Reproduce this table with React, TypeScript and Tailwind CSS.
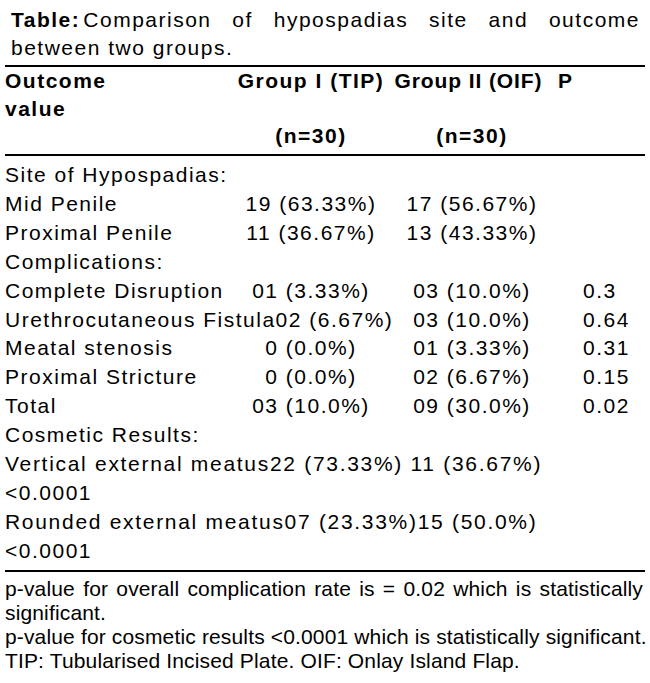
import React from "react";

type Row =
  | { kind: "label"; text: string }
  | { kind: "data"; label: string; g1: string; g2: string; p?: string }
  | { kind: "merged"; text: string; g2: string; p: string }
  | { kind: "line"; text: string; wide?: boolean };

const rows: Row[] = [
  { kind: "label", text: "Site of Hypospadias:" },
  { kind: "data", label: "Mid Penile", g1: "19 (63.33%)", g2: "17 (56.67%)" },
  { kind: "data", label: "Proximal Penile", g1: "11 (36.67%)", g2: "13 (43.33%)" },
  { kind: "label", text: "Complications:" },
  { kind: "data", label: "Complete Disruption", g1: "01 (3.33%)", g2: "03 (10.0%)", p: "0.3" },
  { kind: "merged", text: "Urethrocutaneous Fistula02 (6.67%)", g2: "03 (10.0%)", p: "0.64" },
  { kind: "data", label: "Meatal stenosis", g1: "0 (0.0%)", g2: "01 (3.33%)", p: "0.31" },
  { kind: "data", label: "Proximal Stricture", g1: "0 (0.0%)", g2: "02 (6.67%)", p: "0.15" },
  { kind: "data", label: "Total", g1: "03 (10.0%)", g2: "09 (30.0%)", p: "0.02" },
  { kind: "label", text: "Cosmetic Results:" },
  { kind: "line", text: "Vertical external meatus22 (73.33%) 11 (36.67%)", wide: true },
  { kind: "line", text: "<0.0001" },
  { kind: "line", text: "Rounded external meatus07 (23.33%)15 (50.0%)", wide: true },
  { kind: "line", text: "<0.0001" },
];

function BodyRow({ row }: { row: Row }) {
  if (row.kind === "label") {
    return <div className="col-span-4 whitespace-nowrap">{row.text}</div>;
  }
  if (row.kind === "line") {
    return (
      <div className={row.wide ? "col-span-4 whitespace-nowrap tracking-[1.7px]" : "col-span-4 whitespace-nowrap"}>
        {row.text}
      </div>
    );
  }
  if (row.kind === "merged") {
    return (
      <>
        <div className="col-span-2 whitespace-nowrap">{row.text}</div>
        <div className="text-center whitespace-nowrap">{row.g2}</div>
        <div className="pl-[27px] whitespace-nowrap">{row.p}</div>
      </>
    );
  }
  return (
    <>
      <div className="whitespace-nowrap">{row.label}</div>
      <div className="text-center whitespace-nowrap">{row.g1}</div>
      <div className="text-center whitespace-nowrap">{row.g2}</div>
      <div className="pl-[27px] whitespace-nowrap">{row.p ?? ""}</div>
    </>
  );
}

export default function App() {
  return (
    <div className="w-[650px] h-[683px] overflow-hidden bg-white text-black font-['Liberation_Sans',Arial,sans-serif] text-[21px]">
      <p className="ml-[11px] mr-[10px] pt-[6px] leading-[28px] tracking-[1.5px] text-justify">
        <b className="mr-[3px]">Table:</b>Comparison of hypospadias site and outcome between two groups.
      </p>
      <div className="mx-[5px] mt-[3px] h-[2px] bg-black" />
      <div className="mx-[5px] grid grid-cols-[229px_154px_168px_1fr] font-bold tracking-[1.5px] leading-[27.5px]">
        <div>
          Outcome
          <br />
          value
        </div>
        <div className="text-center whitespace-nowrap">Group I (TIP)</div>
        <div className="text-center whitespace-nowrap pr-[7px] tracking-[0.9px]">Group II (OIF)</div>
        <div className="pl-[2px]">P</div>
        <div />
        <div className="text-center whitespace-nowrap">(n=30)</div>
        <div className="text-center whitespace-nowrap">(n=30)</div>
        <div />
      </div>
      <div className="mx-[5px] mt-[4.5px] h-[2px] bg-black" />
      <div className="mx-[5px] mt-[5px] grid grid-cols-[229px_154px_168px_1fr] tracking-[1.5px] leading-[28.9px]">
        {rows.map((r, i) => (
          <BodyRow key={i} row={r} />
        ))}
      </div>
      <div className="mx-[5px] mt-[4px] h-[2px] bg-black" />
      <div className="ml-[5px] mr-[7px] mt-[5px] leading-[24px] tracking-[0.15px]">
        <p className="text-justify">
          p-value for overall complication rate is = 0.02 which is statistically significant.
        </p>
        <p className="whitespace-nowrap">
          p-value for cosmetic results &lt;0.0001 which is statistically significant.
        </p>
        <p>TIP: Tubularised Incised Plate. OIF: Onlay Island Flap.</p>
      </div>
    </div>
  );
}
